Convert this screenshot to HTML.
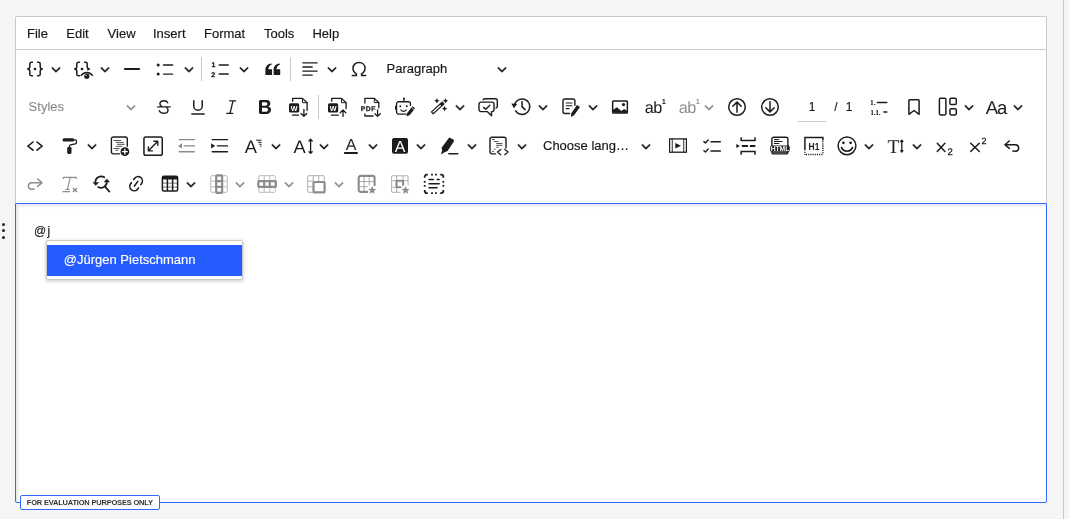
<!DOCTYPE html>
<html lang="en"><head><meta charset="utf-8"><title>Editor</title>
<style>
html,body{margin:0;padding:0}
body{width:1069px;height:519px;overflow:hidden;background:#f5f5f5;position:relative;font-family:"Liberation Sans",Helvetica,Arial,sans-serif;font-size:13px;color:#151515;line-height:1}
#w{position:absolute;left:0;top:0;width:1069px;height:519px;will-change:transform}
.vline{position:absolute;left:1063px;top:0;width:1px;height:519px;background:#c8c8c8}
.top{position:absolute;left:15px;top:16px;width:1030px;height:186px;background:#fff;border:1px solid #c9c9c9;border-bottom:0;border-radius:2px 2px 0 0}
.menubar{position:absolute;left:0;top:0;width:1030px;height:32px;border-bottom:1px solid #c9c9c9}
.menubar span{position:absolute;top:9.5px;white-space:nowrap}
.ic{position:absolute;width:20px;height:20px;overflow:visible;color:#1c1c1c}
.ch{position:absolute;width:10px;height:10px;color:#1c1c1c}
.dis{opacity:.5}
.sep{position:absolute;width:1px;height:24px;background:#c9c9c9}
.lbl{position:absolute;white-space:nowrap}
.menubar span,.lbl,.panel span{-webkit-text-stroke:.15px}
.edit{position:absolute;left:15px;top:203px;width:1030px;height:298px;background:#fff;border:1px solid #2f6bff;border-radius:0 0 2px 2px;box-shadow:inset 2px 2px 3px rgba(0,0,0,.1)}
.mono{position:absolute;left:34px;top:222.7px;font-size:12px;letter-spacing:1.4px;color:#151515;line-height:16px;-webkit-text-stroke:.15px}
.panel{position:absolute;left:46px;top:240.2px;width:195px;height:37.4px;background:#fff;border:1px solid #c9c9c9;border-radius:2px;box-shadow:0 1px 3px 1px rgba(0,0,0,.15)}
.panel .it{position:absolute;left:0;top:3.86px;width:195px;height:30.9px;background:#255cff;color:#fff}
.panel .it span{position:absolute;left:16.8px;top:7.7px;white-space:nowrap}
.badge{position:absolute;left:20px;top:495px;width:138px;height:13px;background:#fff;border:1px solid #2f6bff;border-radius:2px;box-sizing:content-box}
.badge span{position:absolute;left:5.8px;top:2.8px;font-size:7.5px;font-weight:bold;letter-spacing:-.2px;color:#333;white-space:nowrap}
.dots{position:absolute;left:2px;width:3px;height:3px;border-radius:50%;background:#222}
</style></head><body>
<div id="w"><div class="vline"></div>
<div class="top"><div class="menubar">
<span style="left:11.0px">File</span>
<span style="left:50.3px">Edit</span>
<span style="left:91.6px">View</span>
<span style="left:137.0px">Insert</span>
<span style="left:188.0px">Format</span>
<span style="left:248.0px">Tools</span>
<span style="left:296.4px">Help</span>
</div></div>
<svg class="ic" style="left:24.90px;top:58.70px" viewBox="0 0 20 20"><g fill="none" stroke="currentColor" stroke-width="1.5" stroke-linecap="round" stroke-linejoin="round"><path d="M7.4 3.2H6.4a1.6 1.6 0 0 0-1.6 1.6V7.6c0 1.3-.9 2.4-2.2 2.4 1.300 0 2.200 1.100 2.200 2.400v2.800a1.600 1.600 0 0 0 1.600 1.600h1"/><path d="M12.6 3.2h1a1.6 1.6 0 0 1 1.6 1.6V7.6c0 1.3.9 2.4 2.2 2.4-1.300 0-2.200 1.100-2.200 2.400v2.800a1.600 1.600 0 0 1-1.600 1.600h-1"/></g><circle cx="10" cy="10" r="1.35" fill="currentColor" stroke="none"/></svg>
<svg class="ic" style="left:72.00px;top:58.70px" viewBox="0 0 20 20"><g fill="none" stroke="currentColor" stroke-width="1.5" stroke-linecap="round" stroke-linejoin="round"><path d="M7.4 3.2H6.4a1.6 1.6 0 0 0-1.6 1.6V7.6c0 1.3-.9 2.4-2.2 2.4 1.300 0 2.200 1.100 2.200 2.400v2.800a1.600 1.600 0 0 0 1.600 1.600h1"/><path d="M12.6 3.2h1a1.6 1.6 0 0 1 1.6 1.6V7.6c0 1.3.9 2.4 2.2 2.400-.700 0-1.200.300-1.600.800"/><path d="M9.300 16.300c1.400-1.900 3.300-2.900 5.500-2.900s4.100 1 5.500 2.900" stroke-width="1.500"/></g><circle cx="10" cy="10" r="1.350" fill="currentColor" stroke="none"/><circle cx="14.800" cy="17.200" r="2.600" fill="currentColor" stroke="none"/><circle cx="14" cy="16.200" r=".7" fill="#fff"/></svg>
<svg class="ic" style="left:122.00px;top:58.70px" viewBox="0 0 20 20"><rect x="2" y="9" width="16" height="2" rx=".8" fill="currentColor" stroke="none"/></svg>
<svg class="ic" style="left:155.40px;top:58.70px" viewBox="0 0 20 20"><circle cx="3.2" cy="6" r="1.5" fill="currentColor" stroke="none"/><circle cx="3.2" cy="15.100" r="1.500" fill="currentColor" stroke="none"/><g fill="none" stroke="currentColor" stroke-linecap="round" stroke-linejoin="round" stroke-width="1.300"><path d="M8.500 6h9.200M8.500 15.100h9.200"/></g></svg>
<svg class="ic" style="left:210.00px;top:58.70px" viewBox="0 0 20 20"><g fill="currentColor" stroke="currentColor" stroke-width=".25" text-rendering="geometricPrecision" font-family="Liberation Sans, sans-serif" font-weight="bold" font-size="6.9"><text x="1.5" y="7.800">1</text><text x="1.200" y="18.100">2</text></g><g fill="none" stroke="currentColor" stroke-linecap="round" stroke-linejoin="round" stroke-width="1.300"><path d="M9.200 6h9.100M9.200 15h9.100"/></g></svg>
<svg class="ic" style="left:262.50px;top:58.70px" viewBox="0 0 20 20"><path fill="currentColor" stroke="none" d="M2.400 10.300h6.600V16H2.400zM2.400 10.800c0-3.500 2.100-6 5.900-6.400l.5 1C6.600 6 5.400 7.800 5.300 10.300zM10.600 10.300h6.600V16h-6.600zM10.600 10.800c0-3.500 2.100-6 5.900-6.400l.5 1c-2.200.600-3.400 2.400-3.500 4.900z"/></svg>
<svg class="ic" style="left:300.00px;top:58.70px" viewBox="0 0 20 20"><g fill="none" stroke="currentColor" stroke-linecap="round" stroke-linejoin="round" stroke-width="1.300"><path d="M2.900 3.900h14.200M2.900 8h9.300M2.900 12.100h14.200M2.900 16.200h9.300"/></g></svg>
<svg class="ic" style="left:349.00px;top:58.70px" viewBox="0 0 20 20"><g fill="none" stroke="currentColor" stroke-width="1.5" stroke-linecap="butt" stroke-linejoin="miter"><path d="M2.700 16.400h4.700v-1.500C5.300 13.700 4 11.700 4 9.300 4 5.900 6.600 3.500 10 3.500s6 2.400 6 5.800c0 2.400-1.300 4.400-3.400 5.600v1.500h4.700"/></g></svg>
<svg class="ic" style="left:154.10px;top:96.90px" viewBox="0 0 20 20"><g fill="none" stroke="currentColor" stroke-width="1.5" stroke-linecap="round" stroke-linejoin="round"><path d="M3.800 9.900h12.300" stroke-width="1.400"/><path d="M13.700 5.800c-.600-1.300-2-2-3.900-2-2.300 0-3.900 1.200-3.900 3 0 1.100.600 1.900 1.700 2.500" stroke-width="1.400"/><path d="M12.600 10.500c.900.600 1.400 1.400 1.400 2.500 0 2-1.700 3.300-4.100 3.300-2.200 0-3.900-.900-4.600-2.600" stroke-width="1.400"/></g></svg>
<svg class="ic" style="left:188.00px;top:96.90px" viewBox="0 0 20 20"><g fill="none" stroke="currentColor" stroke-width="1.5" stroke-linecap="round" stroke-linejoin="round"><path d="M5.750 3.800v5.200a4.250 4.250 0 0 0 8.500 0V3.800"/><path d="M3.900 17h12.300"/></g></svg>
<svg class="ic" style="left:221.60px;top:96.90px" viewBox="0 0 20 20"><g fill="none" stroke="currentColor" stroke-linecap="round" stroke-linejoin="round" stroke-width="1.300"><path d="M7.700 3.800h6M4.800 16.300h6M11 3.800 8 16.300"/></g></svg>
<svg class="ic" style="left:255.30px;top:96.90px" viewBox="0 0 20 20"><path fill="currentColor" stroke="none" d="M10.187 17H5.773c-.637 0-1.092-.138-1.364-.415-.273-.277-.409-.718-.409-1.323V4.738c0-.617.140-1.062.419-1.332.279-.270.730-.406 1.354-.406h4.680c.690 0 1.288.041 1.793.124.506.083.960.242 1.360.478.341.197.644.447.906.750a3.262 3.262 0 0 1 .808 2.162c0 1.401-.722 2.426-2.167 3.075C15.050 10.175 16 11.315 16 13.010a3.756 3.756 0 0 1-2.296 3.504 6.100 6.100 0 0 1-1.517.377c-.571.073-1.238.110-2 .110zm-.217-6.217H7v4.087h3.069c1.977 0 2.965-.690 2.965-2.072 0-.707-.256-1.220-.768-1.537-.512-.319-1.277-.478-2.296-.478zM7 5.130v3.619h2.606c.729 0 1.292-.067 1.690-.200a1.600 1.600 0 0 0 .910-.765c.165-.267.247-.566.247-.897 0-.707-.260-1.176-.778-1.409-.519-.232-1.310-.348-2.375-.348H7z"/></svg>
<svg class="ic" style="left:289.00px;top:96.90px" viewBox="0 0 20 20"><g fill="none" stroke="currentColor" stroke-linecap="round" stroke-linejoin="round" stroke-width="1.300"><path d="M3.700 4.300V1.400h9.800l4.600 4.300v7.700"/><path d="M13.500 1.400v4.300h4.600" stroke-width="1"/><path d="M3.400 18.100h6.200"/><path d="M14.900 12.500v6.600M12.100 16.500l2.800 2.800 2.800-2.800"/></g><rect x="0" y="6.300" width="10.200" height="9.300" rx="1.600" fill="currentColor" stroke="none"/><text x="5.100" y="13.600" text-anchor="middle" fill="#fff" text-rendering="geometricPrecision" font-family="Liberation Sans, sans-serif" font-weight="bold" font-size="7.200">W</text></svg>
<svg class="ic" style="left:328.00px;top:96.90px" viewBox="0 0 20 20"><g fill="none" stroke="currentColor" stroke-linecap="round" stroke-linejoin="round" stroke-width="1.300"><path d="M3.700 4.300V1.400h9.800l4.600 4.300v5.800"/><path d="M13.500 1.400v4.300h4.600" stroke-width="1"/><path d="M3.400 18.100h7"/><path d="M15 19.400v-6.300M12.200 15.700l2.800-2.800 2.800 2.800"/></g><rect x="0" y="6.300" width="10.200" height="9.300" rx="1.600" fill="currentColor" stroke="none"/><text x="5.100" y="13.600" text-anchor="middle" fill="#fff" text-rendering="geometricPrecision" font-family="Liberation Sans, sans-serif" font-weight="bold" font-size="7.200">W</text></svg>
<svg class="ic" style="left:361.30px;top:96.90px" viewBox="0 0 20 20"><g fill="none" stroke="currentColor" stroke-linecap="round" stroke-linejoin="round" stroke-width="1.300"><path d="M3.900 6V1.400h9.400l4.500 4.200v5.200"/><path d="M13.300 1.400v4.200h4.500" stroke-width="1"/><path d="M3.900 17v2h8.200"/><path d="M16.600 13v6.300M13.900 16.700l2.700 2.700 2.700-2.700"/></g><text x="-.3" y="13.900" fill="currentColor" stroke="currentColor" stroke-width=".25" text-rendering="geometricPrecision" font-family="Liberation Sans, sans-serif" font-weight="bold" font-size="6.800" letter-spacing=".5">PDF</text></svg>
<svg class="ic" style="left:395.00px;top:96.90px" viewBox="0 0 20 20"><g fill="none" stroke="currentColor" stroke-linecap="round" stroke-linejoin="round" stroke-width="1.300"><path d="M11.300 17.050H3.550a2 2 0 0 1-2-2V6.750a2 2 0 0 1 2-2h9.900a2 2 0 0 1 2 2v1.700"/><path d="M8.900 4.600V2"/><path d="M5.800 13c.700 1 1.700 1.400 2.700 1.400s2-.400 2.700-1.400"/><path d="M.6 9v3.200" stroke-width="1.100"/></g><circle cx="8.900" cy="1.500" r=".95" fill="currentColor" stroke="none"/><circle cx="5.300" cy="9.300" r=".95" fill="currentColor" stroke="none"/><circle cx="11.800" cy="9.300" r=".95" fill="currentColor" stroke="none"/><path fill="currentColor" stroke="none" d="M17.400 9.200 20 11.200 14.800 17.900 11.500 19.400 12.200 15.900z"/><path d="M16.300 10.500l2.800 2.100" stroke="#fff" stroke-width=".6" fill="none"/></svg>
<svg class="ic" style="left:428.70px;top:96.90px" viewBox="0 0 20 20"><g fill="none" stroke="currentColor" stroke-linecap="round" stroke-linejoin="round" stroke-width="1.200"><path d="M2.43 14.84 11.13 6.94 12.87 8.86 4.17 16.76z"/></g><path fill="currentColor" stroke="none" d="M10.73 6.49 13.17 4.28 15.72 7.09 13.27 9.31z"/><path fill="currentColor" stroke="none" d="M7.90 1.00 8.74 2.96 10.70 3.80 8.74 4.64 7.90 6.60 7.06 4.64 5.10 3.80 7.06 2.96zM16.50 1.00 17.34 2.96 19.30 3.80 17.34 4.64 16.50 6.60 15.66 4.64 13.70 3.80 15.66 2.96zM15.60 8.90 16.44 10.86 18.40 11.70 16.44 12.54 15.60 14.50 14.76 12.54 12.80 11.70 14.76 10.86z"/></svg>
<svg class="ic" style="left:478.00px;top:96.90px" viewBox="0 0 20 20"><g fill="none" stroke="currentColor" stroke-linecap="round" stroke-linejoin="round" stroke-width="1.400"><path d="M3 5.100h11a2 2 0 0 1 2 2v5.500a2 2 0 0 1-2 2h-.500v4.100l-4.300-4.100H3a2 2 0 0 1-2-2V7.100a2 2 0 0 1 2-2z"/><path d="M5.200 2.800A2 2 0 0 1 7 1.700h10.300a2 2 0 0 1 2 2v5.600a2 2 0 0 1-1.200 1.800"/><path d="M5.600 10.400l2.200 1.900 4-4"/></g></svg>
<svg class="ic" style="left:511.70px;top:96.90px" viewBox="0 0 20 20"><g fill="none" stroke="currentColor" stroke-width="1.5" stroke-linecap="round" stroke-linejoin="round" transform="translate(-.3 -.6)"><path d="M2.900 8.300a7.700 7.700 0 1 1 1 6.200"/><path d="M10.300 5.200v5l3.100 3"/></g><path fill="currentColor" stroke="none" d="M-.7 6.600l5.900.3-3.300 4.300z"/></svg>
<svg class="ic" style="left:561.00px;top:96.90px" viewBox="0 0 20 20"><g fill="none" stroke="currentColor" stroke-linecap="round" stroke-linejoin="round" stroke-width="1.400"><path d="M8.500 16.500H4a2 2 0 0 1-2-2V4a2 2 0 0 1 2-2h7.900a2 2 0 0 1 2 2v4.200"/><path d="M4.800 6h6.600M4.800 8.800h6.600M4.800 11.600h3.700" stroke-width="1.100" stroke-linecap="butt"/></g><path fill="currentColor" stroke="none" d="M16 7.900l3 2.200-5.900 8.200-3.200 1.600.4-3.600z"/></svg>
<svg class="ic" style="left:610.10px;top:96.90px" viewBox="0 0 20 20"><g fill="none" stroke="currentColor" stroke-width="1.5" stroke-linecap="round" stroke-linejoin="round"><rect x="2.650" y="3.900" width="14.700" height="12.100" rx=".8"/></g><circle cx="13.500" cy="7.600" r="1.600" fill="currentColor" stroke="none"/><path fill="currentColor" stroke="none" d="M2.500 15.500v-2.200l4.400-3 4.500 3.700 2.800-1.900 3 2v2z"/></svg>
<svg class="ic" style="left:644.00px;top:96.90px" viewBox="0 0 20 20"><text x=".8" y="16.300" fill="currentColor" stroke="none" text-rendering="geometricPrecision" font-family="Liberation Sans, sans-serif" font-size="16.300" letter-spacing="-.5">ab</text><text x="17.700" y="6.900" fill="currentColor" stroke="none" text-rendering="geometricPrecision" font-family="Liberation Sans, sans-serif" font-weight="bold" font-size="7.400">1</text></svg>
<svg class="ic dis" style="left:677.70px;top:96.90px" viewBox="0 0 20 20"><text x=".8" y="16.300" fill="currentColor" stroke="none" text-rendering="geometricPrecision" font-family="Liberation Sans, sans-serif" font-size="16.300" letter-spacing="-.5">ab</text><text x="17.700" y="6.900" fill="currentColor" stroke="none" text-rendering="geometricPrecision" font-family="Liberation Sans, sans-serif" font-weight="bold" font-size="7.400">1</text></svg>
<svg class="ic" style="left:726.90px;top:96.90px" viewBox="0 0 20 20"><g fill="none" stroke="currentColor" stroke-width="1.5" stroke-linecap="round" stroke-linejoin="round"><circle cx="10" cy="10" r="8.300"/><path d="M10 15.300V5.200M5.800 9.300 10 5.100l4.200 4.200"/></g></svg>
<svg class="ic" style="left:760.40px;top:96.90px" viewBox="0 0 20 20"><g fill="none" stroke="currentColor" stroke-width="1.5" stroke-linecap="round" stroke-linejoin="round"><circle cx="10" cy="10" r="8.300"/><path d="M10 4.700v10.100M5.800 10.700 10 14.900l4.200-4.200"/></g></svg>
<svg class="ic" style="left:869.30px;top:96.90px" viewBox="0 0 20 20"><g fill="currentColor" stroke="none" text-rendering="geometricPrecision" font-family="Liberation Serif, serif" font-weight="bold" font-size="7.500"><text x="1" y="7.600">1.</text><text x="1.200" y="17.600" letter-spacing="-.3">1.1.</text></g><g fill="none" stroke="currentColor" stroke-width="1.5" stroke-linecap="round" stroke-linejoin="round"><path d="M8.400 5.400h9.400M14.900 15.100h2.900"/></g></svg>
<svg class="ic" style="left:904.00px;top:96.90px" viewBox="0 0 20 20"><g fill="none" stroke="currentColor" stroke-width="1.5" stroke-linecap="round" stroke-linejoin="round"><path d="M4.900 3.700a.900.900 0 0 1 .9-.9h8.400a.900.900 0 0 1 .9.900V17.300L10 13.500l-5.100 3.800z"/></g></svg>
<svg class="ic" style="left:937.50px;top:96.90px" viewBox="0 0 20 20"><g fill="none" stroke="currentColor" stroke-width="1.5" stroke-linecap="round" stroke-linejoin="round"><rect x="1.400" y="1.300" width="6.500" height="16.600" rx="1.300"/><rect x="11.900" y="1.300" width="6.400" height="6.200" rx="1.300"/><rect x="11.900" y="11.700" width="6.400" height="6.200" rx="1.300"/></g></svg>
<svg class="ic" style="left:986.20px;top:96.90px" viewBox="0 0 20 20"><text x="-.3" y="16.700" fill="currentColor" stroke="none" text-rendering="geometricPrecision" font-family="Liberation Sans, sans-serif" font-size="18.500" letter-spacing="-1">Aa</text></svg>
<svg class="ic" style="left:24.85px;top:135.90px" viewBox="0 0 20 20"><g fill="none" stroke="currentColor" stroke-linecap="round" stroke-linejoin="round" stroke-width="1.600"><path d="M8 6 2.900 10.100 8 14.200M12 6l5.100 4.100L12 14.200"/></g></svg>
<svg class="ic" style="left:58.55px;top:135.90px" viewBox="0 0 20 20"><rect x="3.500" y="2.200" width="11.700" height="3.300" rx="1.500" fill="currentColor" stroke="none"/><g fill="none" stroke="currentColor" stroke-linecap="round" stroke-linejoin="round" stroke-width="1.300"><path d="M15.200 3.800h.9a1.400 1.400 0 0 1 1.400 1.400v1.300a1.400 1.400 0 0 1-1.100 1.400l-4.900 1a1.400 1.400 0 0 0-1.100 1.400v1.200"/></g><rect x="8.200" y="11" width="4.300" height="6.900" rx="1.300" fill="currentColor" stroke="none"/></svg>
<svg class="ic" style="left:109.60px;top:135.90px" viewBox="0 0 20 20"><g fill="none" stroke="currentColor" stroke-linecap="round" stroke-linejoin="round" stroke-width="1.400"><path d="M9.500 17.900H3.400a2 2 0 0 1-2-2V3a2 2 0 0 1 2-2h11.900a2 2 0 0 1 2 2v7.300"/></g><g fill="none" stroke="currentColor" stroke-linejoin="round" stroke-width=".9" stroke-linecap="butt" opacity=".85"><path d="M3.500 4.500H11M5.800 6.400h8M7.200 8.300h7.500M5.800 10.300h6.600M3.500 12.500h6.100M5.400 14.300h2.800"/></g><circle cx="14.900" cy="15.700" r="4.400" fill="currentColor" stroke="none"/><path d="M14.900 13.300v4.800M12.500 15.700h4.800" stroke="#fff" stroke-width="1.300" stroke-linecap="round" fill="none"/></svg>
<svg class="ic" style="left:143.00px;top:135.90px" viewBox="0 0 20 20"><g fill="none" stroke="currentColor" stroke-width="1.5" stroke-linecap="round" stroke-linejoin="round"><rect x=".95" y=".95" width="18.300" height="18.300" rx="1.800"/><path d="M5.700 14.600 14.500 5.600M5.400 11v3.900h3.900M10.900 5.300h3.900v3.900" stroke-width="1.400"/></g></svg>
<svg class="ic dis" style="left:177.00px;top:135.90px" viewBox="0 0 20 20"><g fill="none" stroke="currentColor" stroke-linecap="round" stroke-linejoin="round" stroke-width="1.400"><path d="M2.200 3.600h15.300M7.400 9.900h10.100M2.200 15.700h15.300"/></g><path fill="currentColor" stroke="none" d="M1 9.900 5 7.300v5.200z"/></svg>
<svg class="ic" style="left:210.10px;top:135.90px" viewBox="0 0 20 20"><g fill="none" stroke="currentColor" stroke-linecap="round" stroke-linejoin="round" stroke-width="1.400"><path d="M2.200 3.600h15.300M7.400 9.900h10.100M2.200 15.700h15.300"/></g><path fill="currentColor" stroke="none" d="M5.200 9.900 1.100 7.300v5.200z"/></svg>
<svg class="ic" style="left:244.40px;top:135.90px" viewBox="0 0 20 20"><text x=".8" y="16.800" fill="currentColor" stroke="none" text-rendering="geometricPrecision" font-family="Liberation Sans, sans-serif" font-size="18.300">A</text><g fill="none" stroke="currentColor" stroke-linejoin="round" stroke-width="1" stroke-linecap="butt"><path d="M12.200 4.200h5.300M14 6.300h3.500M15.200 8.300h2.300M16.100 10.200h1.400"/></g></svg>
<svg class="ic" style="left:293.70px;top:135.90px" viewBox="0 0 20 20"><text x="-.6" y="16.800" fill="currentColor" stroke="none" text-rendering="geometricPrecision" font-family="Liberation Sans, sans-serif" font-size="18.300">A</text><g fill="none" stroke="currentColor" stroke-linecap="round" stroke-linejoin="round" stroke-width="1.300"><path d="M16.600 4v12.700M15 5l1.600-1.700L18.200 5M15 15.700l1.600 1.700 1.600-1.700"/></g></svg>
<svg class="ic" style="left:341.00px;top:135.90px" viewBox="0 0 20 20"><text x="10.050" y="14.400" text-anchor="middle" fill="currentColor" stroke="none" text-rendering="geometricPrecision" font-family="Liberation Sans, sans-serif" font-size="16">A</text><rect x="2.900" y="16.100" width="14" height="1.900" rx=".8" fill="currentColor" stroke="none"/></svg>
<svg class="ic" style="left:390.00px;top:135.90px" viewBox="0 0 20 20"><rect x="2" y="2" width="16" height="15.700" rx="2" fill="currentColor" stroke="none"/><text x="10" y="15.700" text-anchor="middle" fill="#fff" text-rendering="geometricPrecision" font-family="Liberation Sans, sans-serif" font-size="16">A</text></svg>
<svg class="ic" style="left:440.00px;top:135.90px" viewBox="0 0 20 20"><path fill="currentColor" stroke="none" d="M9.200 1.400 13.900 3.700 13.800 5.600 7.600 15 4.600 16.300.9 18.600 2.200 14.600 1.600 11.800z"/><g fill="none" stroke="currentColor" stroke-linecap="round" stroke-linejoin="round" stroke-width="1.400"><path d="M8.800 17.700h9"/></g></svg>
<svg class="ic" style="left:489.00px;top:135.90px" viewBox="0 0 20 20"><g fill="none" stroke="currentColor" stroke-linecap="round" stroke-linejoin="round" stroke-width="1.400"><path d="M6.500 17.900H3a2 2 0 0 1-2-2V3.200a2 2 0 0 1 2-2h12a2 2 0 0 1 2 2v8.800"/><path d="M11.700 13.500 8.500 16.100l3.200 2.600M15.800 13.500l3.300 2.600-3.300 2.600" stroke-width="1.300"/></g><g fill="none" stroke="currentColor" stroke-linejoin="round" stroke-width=".9" stroke-linecap="butt" opacity=".85"><path d="M3 3.500h2.800M4.800 5.500h4.700M7.200 7.500h6.200M7.200 9.300h6.200M7.200 11.200h2.400M4.800 13.300h1.700M3 15.400h1.900"/></g></svg>
<svg class="ic" style="left:668.00px;top:135.90px" viewBox="0 0 20 20"><g fill="none" stroke="currentColor" stroke-linecap="round" stroke-width="1.300" stroke-linejoin="miter"><rect x="1.650" y="2.900" width="16.700" height="13.300"/><path d="M4.200 2.900v13.300M15.800 2.900v13.300" stroke-width="1"/><path d="M2.900 4.500v10.500M17.100 4.500v10.500" stroke-width="1" stroke-dasharray="1 1.600" stroke="#fff"/></g><path fill="currentColor" stroke="none" d="M7.300 7.100l5.700 2.700-5.700 2.700z"/></svg>
<svg class="ic" style="left:701.50px;top:135.90px" viewBox="0 0 20 20"><g fill="none" stroke="currentColor" stroke-width="1.5" stroke-linecap="round" stroke-linejoin="round"><path d="M9 5.800h9.300M9 14.900h9.300"/><path d="M1.900 5.600l1.500 1.300L6.200 4M1.900 14.700l1.500 1.300 2.800-2.900" stroke-width="1.400"/></g></svg>
<svg class="ic" style="left:735.50px;top:135.90px" viewBox="0 0 20 20"><g fill="none" stroke="currentColor" stroke-width="1.5" stroke-linecap="butt" stroke-linejoin="miter"><path d="M5.200 1.200V4.500h13.800V1.200M5.200 18.800V15.500h13.800v3.300"/><path d="M5.900 10H12M13.800 10h5.600" stroke-width="2"/></g><path fill="currentColor" stroke="none" d="M.3 7.900l3.600 2.100-3.600 2.100z"/></svg>
<svg class="ic" style="left:770.00px;top:135.90px" viewBox="0 0 20 20"><g fill="none" stroke="currentColor" stroke-linecap="round" stroke-linejoin="round" stroke-width="1.400"><rect x="1.900" y="1.200" width="16" height="16.700" rx="2"/><path d="M4 3.600h5.300M4 5.500h8.600M4 7.500h5.300M3 16.700h14" stroke-width="1" stroke-linecap="butt"/></g><rect x=".2" y="9.400" width="19.500" height="6.400" rx="1.500" fill="currentColor" stroke="none"/><text x="10" y="15" text-anchor="middle" fill="#fff" text-rendering="geometricPrecision" font-family="Liberation Sans, sans-serif" font-weight="bold" font-size="6.800" letter-spacing="-.1">HTML</text></svg>
<svg class="ic" style="left:804.20px;top:135.90px" viewBox="0 0 20 20"><g fill="none" stroke="currentColor" stroke-width="1.5" stroke-linecap="butt" stroke-linejoin="miter"><path d="M.9 14.200V1.500h18v3"/><path d="M18.900 5.200v13M.9 15.700v3M1.900 18.600h17" stroke-dasharray="1.100 1.100"/></g><text x="4.600" y="13.700" textLength="10.800" lengthAdjust="spacingAndGlyphs" fill="currentColor" stroke="none" text-rendering="geometricPrecision" font-family="Liberation Sans, sans-serif" font-weight="bold" font-size="10.300">H1</text></svg>
<svg class="ic" style="left:837.00px;top:135.90px" viewBox="0 0 20 20"><g fill="none" stroke="currentColor" stroke-width="1.5" stroke-linecap="round" stroke-linejoin="round"><circle cx="10" cy="9.850" r="8.900"/><path d="M4.500 11.400c1 2.500 3 3.800 5.500 3.800s4.500-1.300 5.500-3.800" stroke-width="1.600"/></g><circle cx="6.400" cy="6.800" r="1.350" fill="currentColor" stroke="none"/><circle cx="13.600" cy="6.800" r="1.350" fill="currentColor" stroke="none"/></svg>
<svg class="ic" style="left:886.50px;top:135.90px" viewBox="0 0 20 20"><text x=".6" y="16.500" fill="currentColor" stroke="none" text-rendering="geometricPrecision" font-family="Liberation Serif, serif" font-size="19.500">T</text><g fill="none" stroke="currentColor" stroke-linecap="round" stroke-linejoin="round" stroke-width="1.300"><path d="M14.800 4.500v11.200M13.700 5.500l1.100-1.400 1.100 1.400M13.700 14.700l1.100 1.400 1.100-1.400"/></g></svg>
<svg class="ic" style="left:935.25px;top:135.90px" viewBox="0 0 20 20"><g fill="none" stroke="currentColor" stroke-width="1.5" stroke-linecap="round" stroke-linejoin="round"><path d="M2.300 7.200l7.600 8.300M9.900 7.200l-7.600 8.300"/></g><text x="12.500" y="19.100" fill="currentColor" stroke="currentColor" stroke-width=".25" text-rendering="geometricPrecision" font-family="Liberation Sans, sans-serif" font-size="9.500">2</text></svg>
<svg class="ic" style="left:968.90px;top:135.90px" viewBox="0 0 20 20"><g fill="none" stroke="currentColor" stroke-width="1.5" stroke-linecap="round" stroke-linejoin="round"><path d="M1.700 7.200l8.600 8.300M10.300 7.200l-8.600 8.300"/></g><text x="12.600" y="8.100" fill="currentColor" stroke="currentColor" stroke-width=".25" text-rendering="geometricPrecision" font-family="Liberation Sans, sans-serif" font-size="9">2</text></svg>
<svg class="ic" style="left:1002.00px;top:135.90px" viewBox="0 0 20 20"><g fill="none" stroke="currentColor" stroke-width="1.5" stroke-linecap="round" stroke-linejoin="round"><path d="M7.300 5 2.900 8.700l4.400 3.700M3.200 8.700h10.300a3.300 3.300 0 0 1 .6 6.500l-3.200-.2"/></g></svg>
<svg class="ic dis" style="left:24.85px;top:174.00px" viewBox="0 0 20 20"><g fill="none" stroke="currentColor" stroke-width="1.5" stroke-linecap="round" stroke-linejoin="round"><path d="M12.700 5l4.400 3.700-4.400 3.700M16.800 8.700H6.500a3.300 3.300 0 0 0-.6 6.500l3.200-.2"/></g></svg>
<svg class="ic dis" style="left:58.55px;top:174.00px" viewBox="0 0 20 20"><g fill="none" stroke="currentColor" stroke-linejoin="round" stroke-width="1.100" stroke-linecap="butt"><path d="M4.300 3.400h13.200M4.300 3.400l-.3 1.800M17.500 3.400l-.3 1.800M11.300 3.400 8.400 15.500M6.300 15.500h4.400M3.500 17.600h7.700"/><path d="M13.900 13.900l4.100 4.100M18 13.900l-4.100 4.100" stroke-width="1.400"/></g></svg>
<svg class="ic" style="left:92.25px;top:174.00px" viewBox="0 0 20 20"><g fill="none" stroke="currentColor" stroke-linecap="round" stroke-linejoin="round" stroke-width="1.700"><path d="M3.350 8.100A5.850 5.850 0 0 1 12.350 3.300"/><path d="M14.850 8.100A5.800 5.800 0 0 1 6.150 13.100"/><path d="M13.300 12.900l4.100 4.700"/></g><path fill="currentColor" stroke="currentColor" stroke-width=".5" stroke-linejoin="round" d="M1 8.500h5.500l-2.750 3.100zM12.200 8h5.300l-2.650-3.100z"/></svg>
<svg class="ic" style="left:126.00px;top:174.00px" viewBox="0 0 20 20"><g fill="none" stroke="currentColor" stroke-linecap="round" stroke-linejoin="round" stroke-width="1.600" transform="rotate(35.700 10.100 9.700)"><path d="M5.700 7.700V6.400a4.400 4.400 0 0 1 8.800 0v1.300M5.700 11.700V13a4.400 4.400 0 0 0 8.800 0v-1.300M10.100 6.800v5.800"/></g></svg>
<svg class="ic" style="left:160.00px;top:174.00px" viewBox="0 0 20 20"><g fill="none" stroke="currentColor" stroke-width="1.5" stroke-linecap="round" stroke-linejoin="round"><rect x="2.400" y="2.200" width="15.200" height="14.900" rx="1.500"/><path d="M7.400 4.500v12.500M12.600 4.500v12.500" stroke-linecap="butt"/><path d="M2.500 9.100h15M2.500 13.100h15" stroke-width=".8" opacity=".75"/></g><path fill="currentColor" stroke="none" d="M2.400 3.500a1.400 1.400 0 0 1 1.400-1.400h12.400a1.400 1.400 0 0 1 1.400 1.400v1.900H2.400z"/></svg>
<svg class="ic dis" style="left:209.00px;top:174.00px" viewBox="0 0 20 20"><g fill="none" stroke="currentColor" stroke-width="1" opacity=".6"><rect x="1.700" y="1.700" width="16.600" height="16.600" rx="1"/><path d="M7.200 1.700v16.600M12.800 1.700v16.600M1.700 7.200h16.600M1.700 12.800h16.600"/></g><g fill="none" stroke="currentColor" stroke-linecap="round" stroke-linejoin="round" stroke-width="2.200"><rect x="7.200" y="1.400" width="5.900" height="17.400" rx=".8"/><path d="M7.200 7.200h5.900M7.200 12.800h5.900"/></g></svg>
<svg class="ic dis" style="left:257.10px;top:174.00px" viewBox="0 0 20 20"><g fill="none" stroke="currentColor" stroke-width="1" opacity=".6"><rect x="1.700" y="1.700" width="16.600" height="16.600" rx="1"/><path d="M7.200 1.700v16.600M12.800 1.700v16.600M1.700 7.200h16.600M1.700 12.800h16.600"/></g><g fill="none" stroke="currentColor" stroke-linecap="round" stroke-linejoin="round" stroke-width="2.200"><rect x="1.300" y="7.200" width="17.600" height="5.600" rx=".8"/><path d="M7.200 7.200v5.600M12.800 7.200v5.600"/></g></svg>
<svg class="ic dis" style="left:306.00px;top:174.00px" viewBox="0 0 20 20"><g fill="none" stroke="currentColor" stroke-width="1" opacity=".7"><path d="M7.200 18.300H2.700a1 1 0 0 1-1-1V2.700a1 1 0 0 1 1-1h14.600a1 1 0 0 1 1 1v4.500M7.200 1.700v5.500M12.800 1.700v5.500M1.700 7.200h5.500M1.700 12.800h5.500"/></g><g fill="none" stroke="currentColor" stroke-linecap="round" stroke-linejoin="round" stroke-width="2.200"><rect x="7.500" y="8" width="11.100" height="10.400" rx=".8"/></g></svg>
<svg class="ic dis" style="left:356.50px;top:174.00px" viewBox="0 0 20 20"><g fill="none" stroke="currentColor" stroke-width="1" opacity=".75"><path d="M7.100 1.800v15.800M12.200 1.800v9.500M1.800 7.600h15.800M1.800 12.700h9"/></g><g fill="none" stroke="currentColor" stroke-linecap="round" stroke-linejoin="round" stroke-width="2.100"><path d="M10.300 17.900H3.700a2 2 0 0 1-2-2V3.900a2 2 0 0 1 2-2h11.900a2 2 0 0 1 2 2v7.300"/></g><path fill="currentColor" stroke="none" d="M15.20 11.90 16.29 14.80 19.38 14.94 16.96 16.87 17.79 19.86 15.20 18.15 12.61 19.86 13.44 16.87 11.02 14.94 14.11 14.80z"/></svg>
<svg class="ic dis" style="left:390.20px;top:174.00px" viewBox="0 0 20 20"><g fill="none" stroke="currentColor" stroke-width="1" opacity=".7"><path d="M10.500 18.300H2.600a1 1 0 0 1-1-1V2.800a1 1 0 0 1 1-1h14.500a1 1 0 0 1 1 1v8.500M6.600 1.800v16.500M13.100 1.800v10M1.600 6.700h16.500M1.600 13.200h9"/></g><g fill="none" stroke="currentColor" stroke-linecap="round" stroke-linejoin="round" stroke-width="2.100"><path d="M10.500 13.200H7a.500.500 0 0 1-.5-.5V7.200a.500.500 0 0 1 .5-.5h5.600a.500.500 0 0 1 .5.500v3.500"/></g><path fill="currentColor" stroke="none" d="M15.60 11.90 16.69 14.80 19.78 14.94 17.36 16.87 18.19 19.86 15.60 18.15 13.01 19.86 13.84 16.87 11.42 14.94 14.51 14.80z"/></svg>
<svg class="ic" style="left:424.00px;top:174.00px" viewBox="0 0 20 20"><g fill="none" stroke="currentColor" stroke-linejoin="round" stroke-width="1.800" stroke-linecap="butt"><path d="M.7 3.800V2.700a2 2 0 0 1 2-2h1.100M16.200.7h1.100a2 2 0 0 1 2 2v1.100M19.300 16v1.100a2 2 0 0 1-2 2h-1.100M3.800 19.100H2.700a2 2 0 0 1-2-2V16"/><path d="M7.100.7h1.800M11.100.7h1.800M7.100 19.100h1.800M11.100 19.100h1.800M.7 7v1.800M.7 11v1.800M19.300 7v1.800M19.300 11v1.800"/></g><g fill="none" stroke="currentColor" stroke-linecap="round" stroke-linejoin="round" stroke-width="1.500"><path d="M5 5.600h4.400M13.200 5.600h2M5 9.700h10.200M5 13.800h8.100"/></g></svg>
<svg class="ch" style="left:51.00px;top:64.05px" viewBox="0 0 10 10"><path fill="currentColor" stroke="currentColor" stroke-width=".3" d="M.941 4.523a.75.75 0 1 1 1.060-1.060l3.006 3.005 3.005-3.005a.750.750 0 1 1 1.060 1.060l-3.549 3.550a.750.750 0 0 1-1.168-.136L.941 4.523z"/></svg>
<svg class="ch" style="left:100.00px;top:64.05px" viewBox="0 0 10 10"><path fill="currentColor" stroke="currentColor" stroke-width=".3" d="M.941 4.523a.75.75 0 1 1 1.060-1.060l3.006 3.005 3.005-3.005a.750.750 0 1 1 1.060 1.060l-3.549 3.550a.750.750 0 0 1-1.168-.136L.941 4.523z"/></svg>
<svg class="ch" style="left:183.90px;top:64.05px" viewBox="0 0 10 10"><path fill="currentColor" stroke="currentColor" stroke-width=".3" d="M.941 4.523a.75.75 0 1 1 1.060-1.060l3.006 3.005 3.005-3.005a.750.750 0 1 1 1.060 1.060l-3.549 3.550a.750.750 0 0 1-1.168-.136L.941 4.523z"/></svg>
<svg class="ch" style="left:239.00px;top:64.05px" viewBox="0 0 10 10"><path fill="currentColor" stroke="currentColor" stroke-width=".3" d="M.941 4.523a.75.75 0 1 1 1.060-1.060l3.006 3.005 3.005-3.005a.750.750 0 1 1 1.060 1.060l-3.549 3.550a.750.750 0 0 1-1.168-.136L.941 4.523z"/></svg>
<svg class="ch" style="left:327.00px;top:64.05px" viewBox="0 0 10 10"><path fill="currentColor" stroke="currentColor" stroke-width=".3" d="M.941 4.523a.75.75 0 1 1 1.060-1.060l3.006 3.005 3.005-3.005a.750.750 0 1 1 1.060 1.060l-3.549 3.550a.750.750 0 0 1-1.168-.136L.941 4.523z"/></svg>
<svg class="ch" style="left:497.00px;top:64.05px" viewBox="0 0 10 10"><path fill="currentColor" stroke="currentColor" stroke-width=".3" d="M.941 4.523a.75.75 0 1 1 1.060-1.060l3.006 3.005 3.005-3.005a.750.750 0 1 1 1.060 1.060l-3.549 3.550a.750.750 0 0 1-1.168-.136L.941 4.523z"/></svg>
<svg class="ch dis" style="left:126.00px;top:102.25px" viewBox="0 0 10 10"><path fill="currentColor" stroke="currentColor" stroke-width=".3" d="M.941 4.523a.75.75 0 1 1 1.060-1.060l3.006 3.005 3.005-3.005a.750.750 0 1 1 1.060 1.060l-3.549 3.550a.750.750 0 0 1-1.168-.136L.941 4.523z"/></svg>
<svg class="ch" style="left:455.10px;top:102.25px" viewBox="0 0 10 10"><path fill="currentColor" stroke="currentColor" stroke-width=".3" d="M.941 4.523a.75.75 0 1 1 1.060-1.060l3.006 3.005 3.005-3.005a.750.750 0 1 1 1.060 1.060l-3.549 3.550a.750.750 0 0 1-1.168-.136L.941 4.523z"/></svg>
<svg class="ch" style="left:538.00px;top:102.25px" viewBox="0 0 10 10"><path fill="currentColor" stroke="currentColor" stroke-width=".3" d="M.941 4.523a.75.75 0 1 1 1.060-1.060l3.006 3.005 3.005-3.005a.750.750 0 1 1 1.060 1.060l-3.549 3.550a.750.750 0 0 1-1.168-.136L.941 4.523z"/></svg>
<svg class="ch" style="left:588.00px;top:102.25px" viewBox="0 0 10 10"><path fill="currentColor" stroke="currentColor" stroke-width=".3" d="M.941 4.523a.75.75 0 1 1 1.060-1.060l3.006 3.005 3.005-3.005a.750.750 0 1 1 1.060 1.060l-3.549 3.550a.750.750 0 0 1-1.168-.136L.941 4.523z"/></svg>
<svg class="ch dis" style="left:704.20px;top:102.25px" viewBox="0 0 10 10"><path fill="currentColor" stroke="currentColor" stroke-width=".3" d="M.941 4.523a.75.75 0 1 1 1.060-1.060l3.006 3.005 3.005-3.005a.750.750 0 1 1 1.060 1.060l-3.549 3.550a.750.750 0 0 1-1.168-.136L.941 4.523z"/></svg>
<svg class="ch" style="left:964.00px;top:102.25px" viewBox="0 0 10 10"><path fill="currentColor" stroke="currentColor" stroke-width=".3" d="M.941 4.523a.75.75 0 1 1 1.060-1.060l3.006 3.005 3.005-3.005a.750.750 0 1 1 1.060 1.060l-3.549 3.550a.750.750 0 0 1-1.168-.136L.941 4.523z"/></svg>
<svg class="ch" style="left:1013.20px;top:102.25px" viewBox="0 0 10 10"><path fill="currentColor" stroke="currentColor" stroke-width=".3" d="M.941 4.523a.75.75 0 1 1 1.060-1.060l3.006 3.005 3.005-3.005a.750.750 0 1 1 1.060 1.060l-3.549 3.550a.750.750 0 0 1-1.168-.136L.941 4.523z"/></svg>
<svg class="ch" style="left:87.00px;top:141.25px" viewBox="0 0 10 10"><path fill="currentColor" stroke="currentColor" stroke-width=".3" d="M.941 4.523a.75.75 0 1 1 1.060-1.060l3.006 3.005 3.005-3.005a.750.750 0 1 1 1.060 1.060l-3.549 3.550a.750.750 0 0 1-1.168-.136L.941 4.523z"/></svg>
<svg class="ch" style="left:271.10px;top:141.25px" viewBox="0 0 10 10"><path fill="currentColor" stroke="currentColor" stroke-width=".3" d="M.941 4.523a.75.75 0 1 1 1.060-1.060l3.006 3.005 3.005-3.005a.750.750 0 1 1 1.060 1.060l-3.549 3.550a.750.750 0 0 1-1.168-.136L.941 4.523z"/></svg>
<svg class="ch" style="left:319.00px;top:141.25px" viewBox="0 0 10 10"><path fill="currentColor" stroke="currentColor" stroke-width=".3" d="M.941 4.523a.75.75 0 1 1 1.060-1.060l3.006 3.005 3.005-3.005a.750.750 0 1 1 1.060 1.060l-3.549 3.550a.750.750 0 0 1-1.168-.136L.941 4.523z"/></svg>
<svg class="ch" style="left:368.00px;top:141.25px" viewBox="0 0 10 10"><path fill="currentColor" stroke="currentColor" stroke-width=".3" d="M.941 4.523a.75.75 0 1 1 1.060-1.060l3.006 3.005 3.005-3.005a.750.750 0 1 1 1.060 1.060l-3.549 3.550a.750.750 0 0 1-1.168-.136L.941 4.523z"/></svg>
<svg class="ch" style="left:416.00px;top:141.25px" viewBox="0 0 10 10"><path fill="currentColor" stroke="currentColor" stroke-width=".3" d="M.941 4.523a.75.75 0 1 1 1.060-1.060l3.006 3.005 3.005-3.005a.750.750 0 1 1 1.060 1.060l-3.549 3.550a.750.750 0 0 1-1.168-.136L.941 4.523z"/></svg>
<svg class="ch" style="left:467.00px;top:141.25px" viewBox="0 0 10 10"><path fill="currentColor" stroke="currentColor" stroke-width=".3" d="M.941 4.523a.75.75 0 1 1 1.060-1.060l3.006 3.005 3.005-3.005a.750.750 0 1 1 1.060 1.060l-3.549 3.550a.750.750 0 0 1-1.168-.136L.941 4.523z"/></svg>
<svg class="ch" style="left:517.20px;top:141.25px" viewBox="0 0 10 10"><path fill="currentColor" stroke="currentColor" stroke-width=".3" d="M.941 4.523a.75.75 0 1 1 1.060-1.060l3.006 3.005 3.005-3.005a.750.750 0 1 1 1.060 1.060l-3.549 3.550a.750.750 0 0 1-1.168-.136L.941 4.523z"/></svg>
<svg class="ch" style="left:641.30px;top:141.25px" viewBox="0 0 10 10"><path fill="currentColor" stroke="currentColor" stroke-width=".3" d="M.941 4.523a.75.75 0 1 1 1.060-1.060l3.006 3.005 3.005-3.005a.750.750 0 1 1 1.060 1.060l-3.549 3.550a.750.750 0 0 1-1.168-.136L.941 4.523z"/></svg>
<svg class="ch" style="left:864.20px;top:141.25px" viewBox="0 0 10 10"><path fill="currentColor" stroke="currentColor" stroke-width=".3" d="M.941 4.523a.75.75 0 1 1 1.060-1.060l3.006 3.005 3.005-3.005a.750.750 0 1 1 1.060 1.060l-3.549 3.550a.750.750 0 0 1-1.168-.136L.941 4.523z"/></svg>
<svg class="ch" style="left:912.20px;top:141.25px" viewBox="0 0 10 10"><path fill="currentColor" stroke="currentColor" stroke-width=".3" d="M.941 4.523a.75.75 0 1 1 1.060-1.060l3.006 3.005 3.005-3.005a.750.750 0 1 1 1.060 1.060l-3.549 3.550a.750.750 0 0 1-1.168-.136L.941 4.523z"/></svg>
<svg class="ch" style="left:186.00px;top:179.35px" viewBox="0 0 10 10"><path fill="currentColor" stroke="currentColor" stroke-width=".3" d="M.941 4.523a.75.75 0 1 1 1.060-1.060l3.006 3.005 3.005-3.005a.750.750 0 1 1 1.060 1.060l-3.549 3.550a.750.750 0 0 1-1.168-.136L.941 4.523z"/></svg>
<svg class="ch dis" style="left:235.00px;top:179.35px" viewBox="0 0 10 10"><path fill="currentColor" stroke="currentColor" stroke-width=".3" d="M.941 4.523a.75.75 0 1 1 1.060-1.060l3.006 3.005 3.005-3.005a.750.750 0 1 1 1.060 1.060l-3.549 3.550a.750.750 0 0 1-1.168-.136L.941 4.523z"/></svg>
<svg class="ch dis" style="left:284.00px;top:179.35px" viewBox="0 0 10 10"><path fill="currentColor" stroke="currentColor" stroke-width=".3" d="M.941 4.523a.75.75 0 1 1 1.060-1.060l3.006 3.005 3.005-3.005a.750.750 0 1 1 1.060 1.060l-3.549 3.550a.750.750 0 0 1-1.168-.136L.941 4.523z"/></svg>
<svg class="ch dis" style="left:334.00px;top:179.35px" viewBox="0 0 10 10"><path fill="currentColor" stroke="currentColor" stroke-width=".3" d="M.941 4.523a.75.75 0 1 1 1.060-1.060l3.006 3.005 3.005-3.005a.750.750 0 1 1 1.060 1.060l-3.549 3.550a.750.750 0 0 1-1.168-.136L.941 4.523z"/></svg>
<div class="sep" style="left:201.0px;top:57.0px"></div>
<div class="sep" style="left:290.0px;top:57.0px"></div>
<div class="sep" style="left:318.0px;top:95.2px"></div>
<div class="lbl" style="left:386.6px;top:62px">Paragraph</div>
<div class="lbl dis" style="left:28.6px;top:100px">Styles</div>
<div class="lbl" style="left:543.0px;top:138.5px">Choose lang…</div>
<div class="lbl" style="left:798px;top:92px;width:28px;height:29px;border-bottom:1px solid #c9c9c9;text-align:center;line-height:30px;font-size:12px">1</div>
<div class="lbl" style="left:834.3px;top:100.8px;font-size:12px">/</div>
<div class="lbl" style="left:845.8px;top:100.8px;font-size:12px">1</div>
<div class="edit"></div>
<div class="mono">@j</div>
<div class="panel"><div class="it"><span>@Jürgen Pietschmann</span></div></div>
<div class="badge"><span>FOR EVALUATION PURPOSES ONLY</span></div>
<div class="dots" style="top:222.5px"></div><div class="dots" style="top:229.3px"></div><div class="dots" style="top:236.1px"></div>
</div></body></html>
